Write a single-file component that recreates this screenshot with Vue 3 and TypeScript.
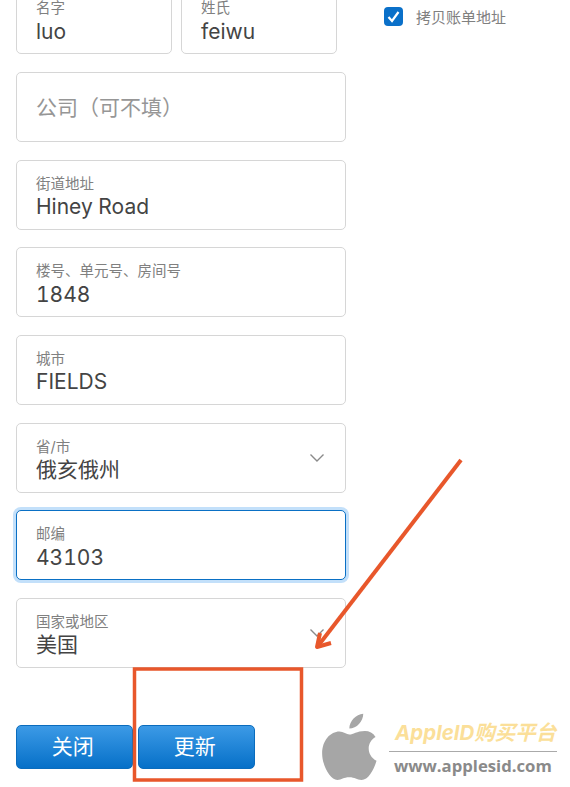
<script setup lang="ts">
interface Field {
  label: string
  value: string
  select?: boolean
  focus?: boolean
}
const fields: Field[] = [
  { label: '街道地址', value: 'Hiney Road' },
  { label: '楼号、单元号、房间号', value: '1848' },
  { label: '城市', value: 'FIELDS' },
  { label: '省/市', value: '俄亥俄州', select: true },
  { label: '邮编', value: '43103', focus: true },
  { label: '国家或地区', value: '美国', select: true },
]
</script>

<template>
  <div class="page">
    <div class="columns">
      <form class="form" @submit.prevent>
        <div class="name-row">
          <div class="field name"><span class="label">名字</span><span class="value">luo</span></div>
          <div class="field name"><span class="label">姓氏</span><span class="value">feiwu</span></div>
        </div>
        <div class="field company"><span class="placeholder">公司（可不填）</span></div>
        <div v-for="f in fields" :key="f.label" class="field" :class="{ focus: f.focus }">
          <span class="label">{{ f.label }}</span>
          <span class="value">{{ f.value }}</span>
          <svg v-if="f.select" class="chev" viewBox="0 0 16 10" width="16" height="10">
            <path d="M1.5 1.5 8 8l6.500-6.500" fill="none" stroke="#8a8a8a" stroke-width="1.4" />
          </svg>
        </div>
        <div class="actions">
          <button type="button" class="btn">关闭</button>
          <button type="button" class="btn">更新</button>
        </div>
      </form>
      <aside class="side">
        <span class="check">
          <svg viewBox="0 0 19 19" width="19" height="19">
            <path d="M4.500 10 8 14 14.500 5" fill="none" stroke="#fff" stroke-width="2.200" />
          </svg>
        </span>
        <span class="check-label">拷贝账单地址</span>
      </aside>
    </div>

    <svg class="marks" viewBox="0 0 570 787" width="570" height="787">
      <g fill="none" stroke="#e8572b" stroke-width="4">
        <path d="M461 460 318 646" />
        <path d="M320 633 317 647 331 643" stroke-linejoin="round" />
        <rect x="134.500" y="669" width="167" height="111" stroke-width="3.500" />
      </g>
    </svg>

    <div class="watermark">
      <svg class="apple" viewBox="36 68 165 202" width="55" height="67">
        <path fill="#a6a6a6" d="M118 115C118 92 138 72 160 70 160 92 140 115 118 115ZM118 133C130 133 140 122 165 122 178 122 190 128 197 140 170 155 168 195 200 212 192 240 175 270 155 270 140 270 135 262 118 262 100 262 95 270 82 270 60 270 36 225 36 190 36 150 62 124 88 124 100 124 110 133 118 133Z"/>
      </svg>
      <div class="wm-text">
        <div class="wm-title">AppleID购买平台</div>
        <div class="wm-url">www.applesid.com</div>
      </div>
    </div>
  </div>
</template>

<style>
html, body { margin: 0; background: #fff; }
</style>

<style scoped>
.page {
  position: relative;
  width: 570px;
  height: 787px;
  overflow: hidden;
  background: #fff;
  font-family: Inter, "Noto Sans CJK SC", sans-serif;
}
.columns {
  display: flex;
  padding: 0.300px 0 0 16px;
  margin-top: -16px;
}
.form {
  display: flex;
  flex-direction: column;
  gap: 17.67px;
  width: 330px;
}
.name-row {
  display: flex;
  gap: 9px;
}
.field {
  position: relative;
  box-sizing: border-box;
  display: flex;
  flex-direction: column;
  justify-content: center;
  height: 70px;
  padding: 7.500px 19px 0;
  border: 1px solid #d6d6d6;
  border-radius: 5px;
  background: #fff;
}
.field.name {
  width: 156px;
}
.field.company {
  padding-top: 0;
  padding-bottom: 1px;
}
.field.focus {
  border-color: #0a70c5;
  box-shadow: 0 0 0 3px #c3e0fa;
}
.label {
  font-size: 14.500px;
  line-height: 16px;
  color: #808080;
}
.value {
  margin-top: 1.500px;
  font-size: 21px;
  line-height: 28px;
  color: #444;
  font-variant-numeric: tabular-nums;
}
.placeholder {
  font-size: 21px;
  color: #969696;
}
.chev {
  position: absolute;
  right: 20px;
  top: 29px;
}
.actions {
  display: flex;
  gap: 5.500px;
  margin-top: 39.300px;
}
.btn {
  width: 116.500px;
  height: 44px;
  padding: 0 3px 3px 0;
  border: 1px solid #0a6cbd;
  border-radius: 5px;
  background: linear-gradient(#3c9ae6, #0670c8);
  color: #fff;
  font-family: inherit;
  font-size: 21px;
}
.side {
  display: flex;
  align-items: center;
  gap: 13px;
  height: 19px;
  margin: 23px 0 0 38px;
}
.check {
  display: block;
  width: 19px;
  height: 19px;
  border-radius: 4px;
  background: #0a70c9;
}
.check svg {
  display: block;
}
.check-label {
  font-size: 15px;
  color: #808080;
}
.marks {
  position: absolute;
  left: 0;
  top: 0;
  pointer-events: none;
}
.watermark {
  position: absolute;
  left: 322px;
  top: 713px;
  display: flex;
  gap: 12px;
}
.apple {
  display: block;
}
.wm-text {
  width: 168px;
}
.wm-title {
  height: 39px;
  box-sizing: border-box;
  padding: 5px 0 0 6px;
  border-bottom: 1px solid #aaa;
  font-size: 20.500px;
  line-height: 30px;
  font-weight: 700;
  font-style: italic;
  color: #fbdf99;
  white-space: nowrap;
}
.wm-url {
  margin-top: 2px;
  padding-left: 5px;
  font-family: "Open Sans", sans-serif;
  font-size: 16.700px;
  line-height: 24px;
  font-weight: 700;
  color: #8a8a8a;
  white-space: nowrap;
}
</style>
